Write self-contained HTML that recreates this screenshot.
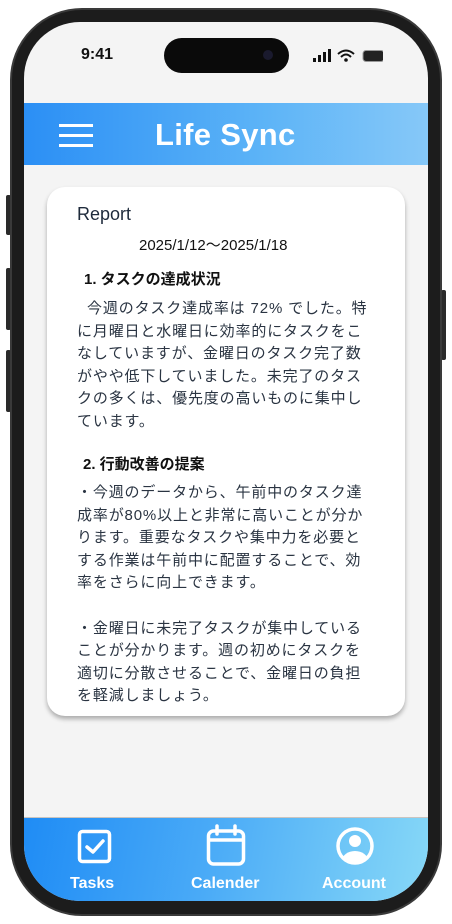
<!DOCTYPE html>
<html><head><meta charset="utf-8"><style>
*{margin:0;padding:0;box-sizing:border-box}
body{width:452px;height:924px;background:#fff;position:relative;overflow:hidden;font-family:"Liberation Sans","Noto Sans CJK JP",sans-serif}
.frame{position:absolute;left:10px;top:8px;width:432px;height:908px;border-radius:72px;background:#1c1c1c;border:2px solid #3a3a3a}
.btn{position:absolute;background:#2a2a2a;border-radius:2px}
.screen{position:absolute;left:24px;top:22px;width:404px;height:879px;border-radius:56px;background:#f4f4f4;overflow:hidden}
.island{position:absolute;left:164px;top:38px;width:125px;height:35px;border-radius:18px;background:#0a0a0a}
.hdr{position:absolute;left:0;top:81px;width:404px;height:62px;background:linear-gradient(90deg,#2b8ff5,#5db4f7 60%,#86c8f8)}
.nav{position:absolute;left:0;top:795px;width:404px;height:84px;background:linear-gradient(100deg,#1f8cf5,#49aaf7 45%,#87d8f7);border-top:1px solid #c9c4c0}
.card{position:absolute;left:23px;top:165px;width:358px;height:529px;background:#fff;border-radius:18px;box-shadow:0 3px 5px rgba(0,0,0,.3)}
.t{position:absolute;white-space:nowrap;color:#1e2a3b}
.body{font-size:15px;line-height:22.6px;letter-spacing:0.85px;color:#2a3442}
.lbl{position:absolute;color:#fff;font-weight:bold;font-size:16px;white-space:nowrap;text-align:center}
</style></head><body>
<div class="btn" style="left:6px;top:195px;width:5px;height:40px"></div>
<div class="btn" style="left:6px;top:268px;width:5px;height:62px"></div>
<div class="btn" style="left:6px;top:350px;width:5px;height:62px"></div>
<div class="btn" style="left:441px;top:290px;width:5px;height:70px"></div>
<div class="frame"></div>
<div class="screen">
 <div class="t" style="left:57px;top:24px;font-size:16px;font-weight:bold;color:#111">9:41</div>
 <svg style="position:absolute;left:289px;top:27px" width="70" height="14" viewBox="0 0 70 14">
  <rect x="0" y="9" width="3" height="4" fill="#111"/><rect x="5" y="6" width="3" height="7" fill="#111"/><rect x="10" y="3" width="3" height="10" fill="#111"/><rect x="15" y="0" width="3" height="13" fill="#111"/>
  <path d="M25 5 Q33 -2 41 5 M28 8 Q33 3 38 8" stroke="#111" stroke-width="2" fill="none"/><circle cx="33" cy="11" r="1.8" fill="#111"/>
  <rect x="50" y="1.5" width="21" height="11" rx="3" fill="#222" stroke="#999" stroke-width="1"/>
 </svg>
 <div class="hdr">
  <div style="position:absolute;left:35px;top:21px;width:34px;height:3px;background:#fff"></div>
  <div style="position:absolute;left:35px;top:31px;width:34px;height:3px;background:#fff"></div>
  <div style="position:absolute;left:35px;top:41px;width:34px;height:3px;background:#fff"></div>
  <div class="t" style="left:131px;top:14px;font-size:31px;font-weight:bold;color:#fff;letter-spacing:0.3px">Life Sync</div>
 </div>
 <div class="card">
  <div class="t" style="left:30px;top:17px;font-size:18px;color:#1e2a3b">Report</div>
  <div class="t" style="left:92px;top:47px;font-size:15px;color:#111">2025/1/12〜2025/1/18</div>
  <div class="t" style="left:37px;top:81px;font-size:15px;font-weight:bold;color:#111">1. タスクの達成状況</div>
  <div class="t body" style="left:30px;top:111px">&nbsp;&nbsp;今週のタスク達成率は 72% でした。特<br>に月曜日と水曜日に効率的にタスクをこ<br>なしていますが、金曜日のタスク完了数<br>がやや低下していました。未完了のタス<br>クの多くは、優先度の高いものに集中し<br>ています。</div>
  <div class="t" style="left:36px;top:266px;font-size:15px;font-weight:bold;color:#111">2. 行動改善の提案</div>
  <div class="t body" style="left:30px;top:295px">・今週のデータから、午前中のタスク達<br>成率が80%以上と非常に高いことが分か<br>ります。重要なタスクや集中力を必要と<br>する作業は午前中に配置することで、効<br>率をさらに向上できます。<br>&nbsp;<br>・金曜日に未完了タスクが集中している<br>ことが分かります。週の初めにタスクを<br>適切に分散させることで、金曜日の負担<br>を軽減しましょう。</div>
 </div>
 <div class="nav">
  <svg style="position:absolute;left:53px;top:11px" width="36" height="36" viewBox="0 0 36 36"><rect x="2.5" y="2.5" width="30" height="30" rx="3" fill="none" stroke="#fff" stroke-width="3.5"/><path d="M10 18 L16 23 L26 12" fill="none" stroke="#fff" stroke-width="3.5" stroke-linecap="round" stroke-linejoin="round"/></svg>
  <svg style="position:absolute;left:182px;top:6px" width="40" height="42" viewBox="0 0 40 42"><rect x="2.5" y="7" width="35" height="33" rx="5" fill="none" stroke="#fff" stroke-width="3.5"/><line x1="2.5" y1="16" x2="37.5" y2="16" stroke="#fff" stroke-width="3.5"/><line x1="11" y1="2" x2="11" y2="10" stroke="#fff" stroke-width="3.5" stroke-linecap="round"/><line x1="29" y1="2" x2="29" y2="10" stroke="#fff" stroke-width="3.5" stroke-linecap="round"/></svg>
  <svg style="position:absolute;left:312px;top:9px" width="38" height="38" viewBox="0 0 38 38"><defs><clipPath id="c"><circle cx="19" cy="19" r="16"/></clipPath></defs><circle cx="19" cy="19" r="17" fill="none" stroke="#fff" stroke-width="3.5"/><circle cx="19" cy="14" r="6" fill="#fff"/><ellipse cx="19" cy="34" rx="13" ry="10" fill="#fff" clip-path="url(#c)"/></svg>
  <div class="lbl" style="left:46px;top:57px">Tasks</div>
  <div class="lbl" style="left:167px;top:57px">Calender</div>
  <div class="lbl" style="left:298px;top:57px">Account</div>
 </div>
</div>
<div class="island"></div>
<div style="position:absolute;left:263px;top:50px;width:10px;height:10px;border-radius:5px;background:#1a1a2e"></div>
</body></html>
